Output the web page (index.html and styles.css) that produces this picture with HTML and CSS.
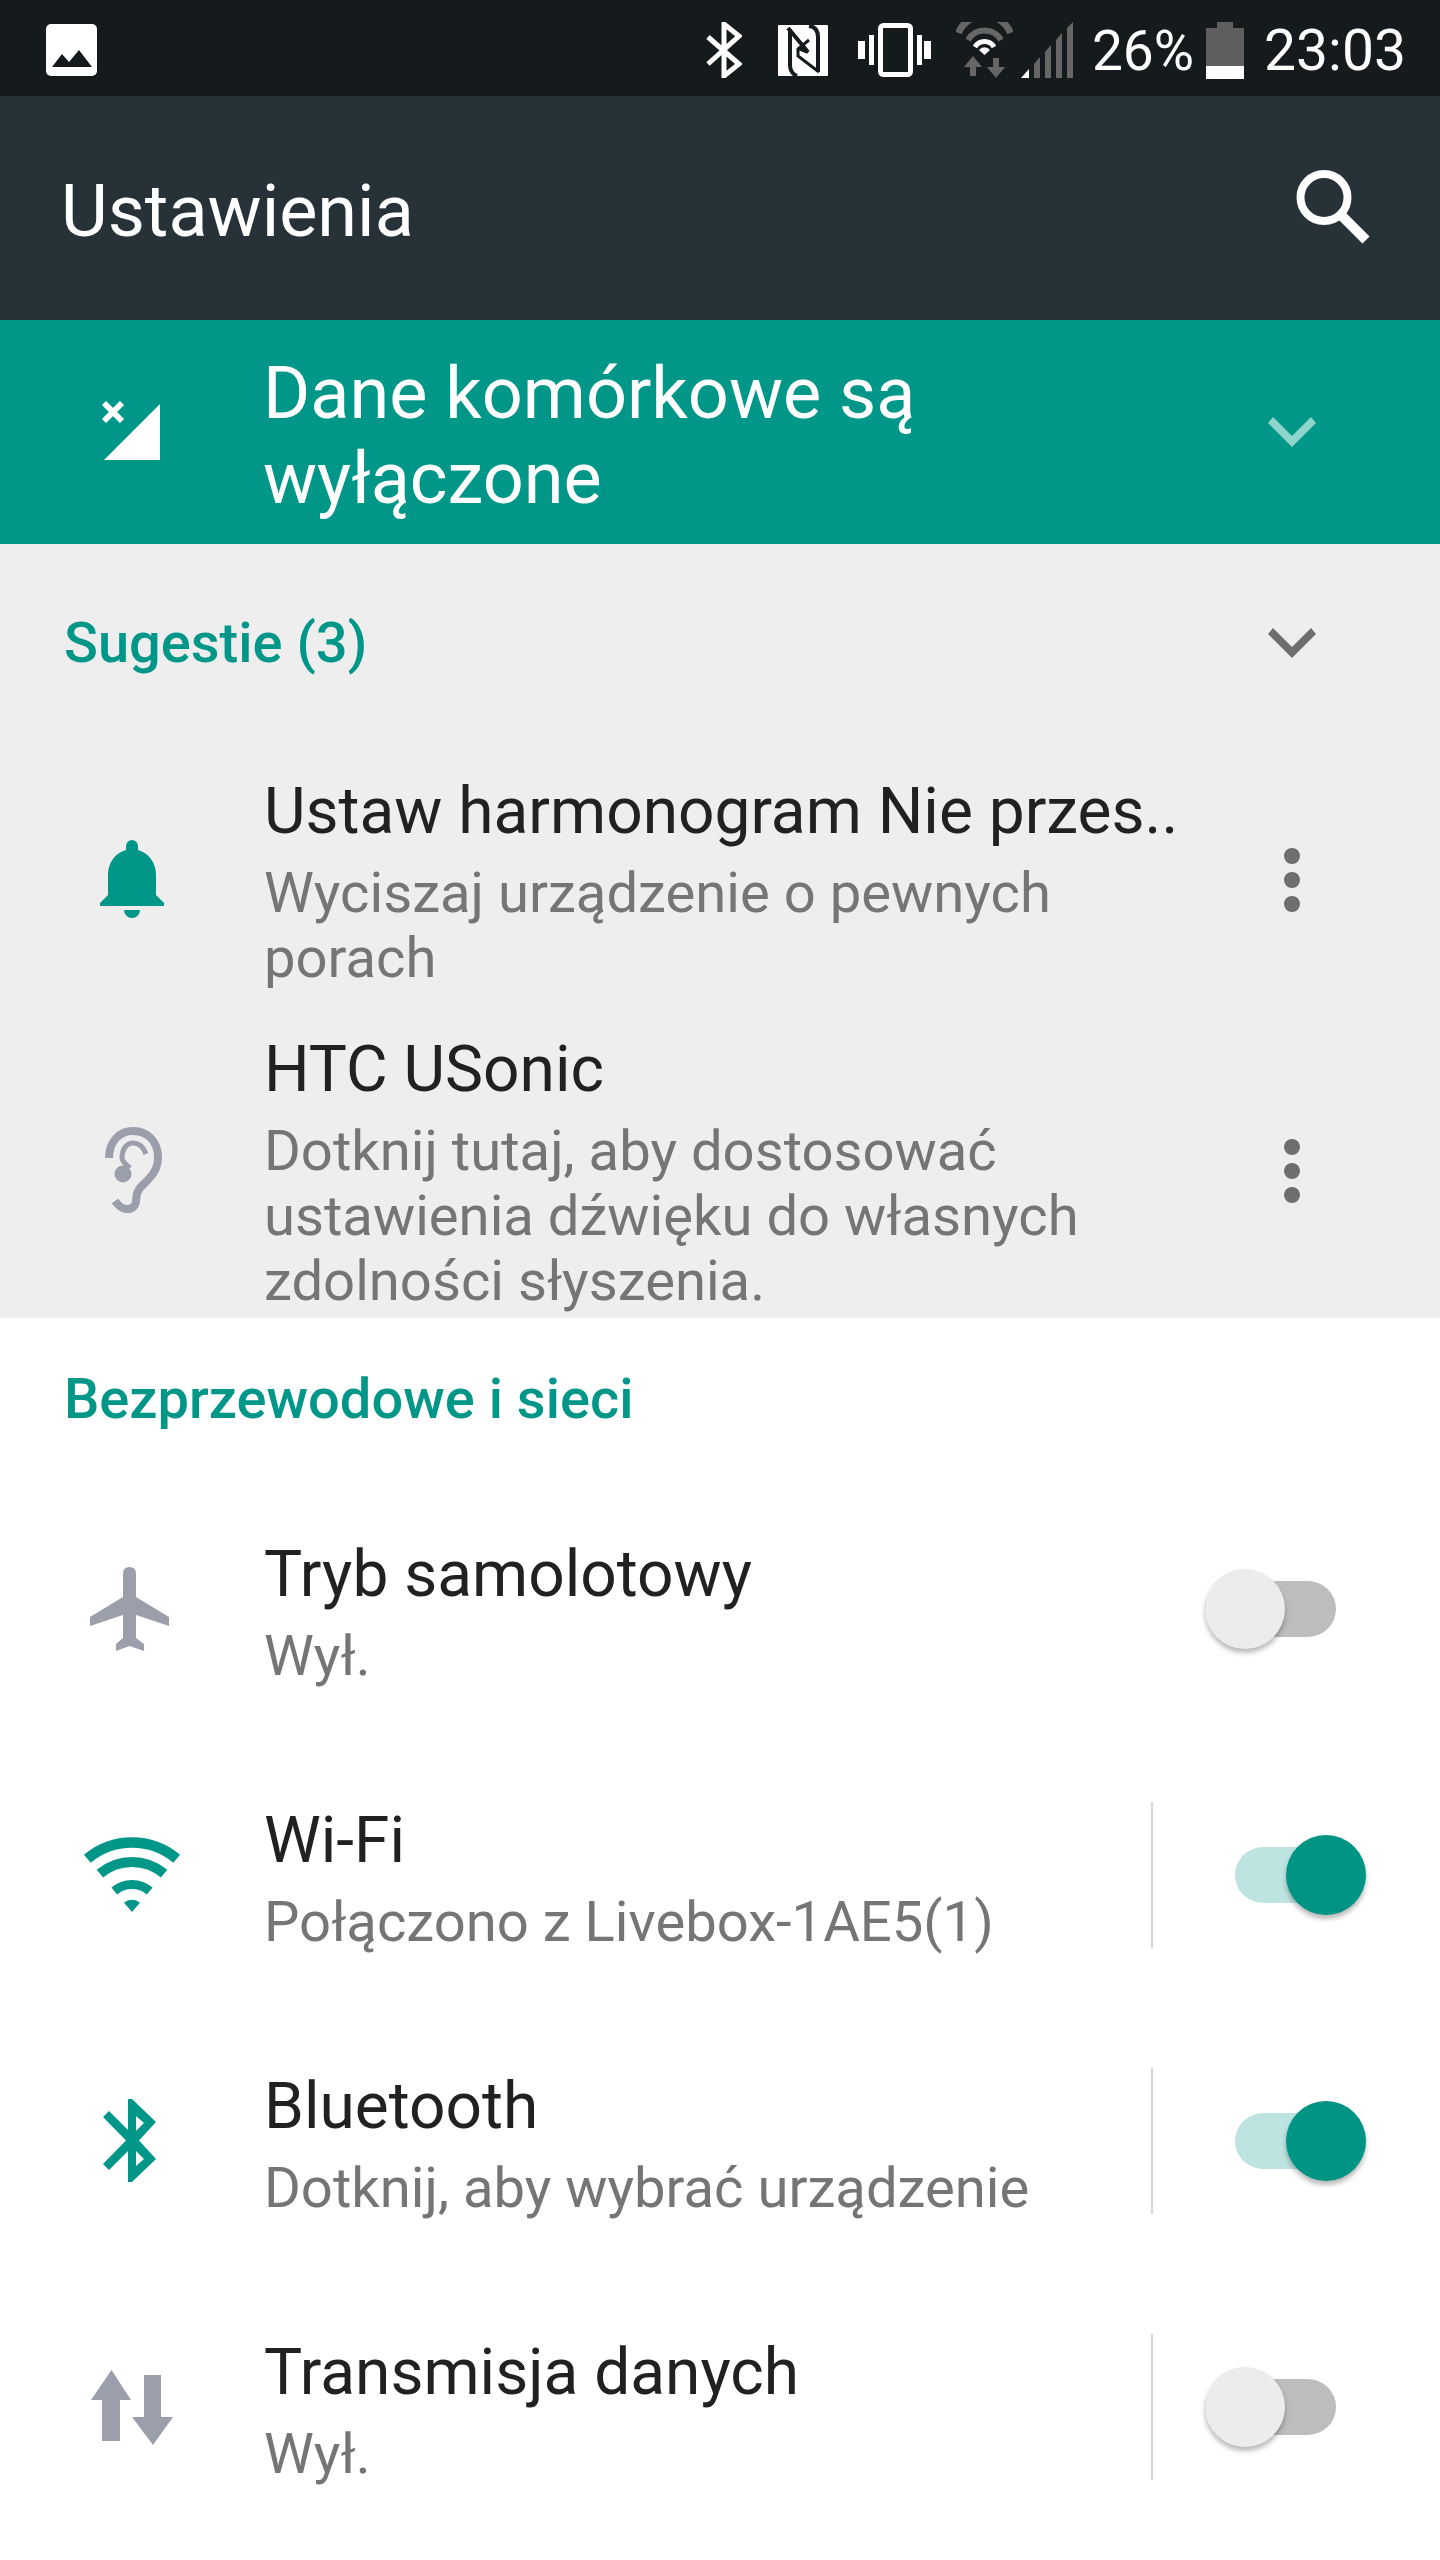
FILE: index.html
```html
<!DOCTYPE html>
<html lang="pl">
<head>
    <meta charset="UTF-8">
    <meta name="viewport" content="width=device-width, initial-scale=1.0">
    <title>Ustawienia</title>
    <link rel="stylesheet" href="styles.css">
</head>
<body>
    <div class="status-bar">
        <svg class="status-image" width="51" height="52" viewBox="0 0 51 52">
            <rect width="51" height="52" rx="5" fill="#fff"/>
            <path d="M6 43 L16 30 L23 38 L33 26 L46 43 Z" fill="#151a1d"/>
        </svg>
        <div class="status-right">
            <svg class="st-bt" width="36" height="56" viewBox="0 0 36 56">
                <path d="M2 15 L33 42 L18 54 V2 L33 14 L2 42" fill="none" stroke="#fff" stroke-width="5"/>
            </svg>
            <svg class="st-nfc" width="50" height="51" viewBox="0 0 50 51">
                <rect width="50" height="51" rx="1" fill="#fff"/>
                <g fill="none" stroke="#151a1d">
                    <path d="M12 4 V40 Q12 48 19 51" stroke-width="4"/>
                    <path d="M10 3 L30 27 L20 23" stroke-width="4"/>
                    <path d="M31 15 L20 24 V31 L41 47" stroke-width="3"/>
                    <path d="M31 1 Q40 2 40 12 V47" stroke-width="4"/>
                </g>
            </svg>
            <svg class="st-vib" width="73" height="54" viewBox="0 0 73 54">
                <rect x="22.5" y="2.5" width="30" height="49" rx="3" fill="none" stroke="#fff" stroke-width="5"/>
                <path d="M0 18 H7 V36 H0 Z M11 12 H16 V42 H11 Z M59 12 H64 V42 H59 Z M66 18 H73 V36 H66 Z" fill="#fff"/>
            </svg>
            <svg class="st-wifi" width="57" height="56" viewBox="0 0 57 56">
                <path d="M2.5 11 A 28 28 0 0 1 54.5 11" fill="none" stroke="#666" stroke-width="7"/>
                <path d="M12 18 A 19 19 0 0 1 45 18" fill="none" stroke="#666" stroke-width="6"/>
                <path d="M19 25 A 11 11 0 0 1 38 25" fill="none" stroke="#fff" stroke-width="5"/>
                <path d="M23 28 A 7 7 0 0 1 34 28 L28.5 33 Z" fill="#fff"/>
                <path d="M8 45 L17 34 L26 45 H20 V54 H14 V45 Z M31 45 H37 V36 H43 V45 H49 L40 56 Z" fill="#666"/>
            </svg>
            <svg class="st-signal" width="52" height="56" viewBox="0 0 52 56">
                <path d="M0 56 L8 47 V56 Z" fill="#fff"/>
                <path d="M13 42 L19 35 V56 H13 Z M24 30 L30 23 V56 H24 Z M35 18 L41 11 V56 H35 Z M46 6 L52 0 V56 H46 Z" fill="#666"/>
            </svg>
            <span class="st-text st-percent">26%</span>
            <svg class="st-battery" width="38" height="57" viewBox="0 0 38 57">
                <path d="M11 0 H27 V6 H38 V44 H0 V6 H11 Z" fill="#5e5e5e"/>
                <rect y="44" width="38" height="13" fill="#fff"/>
            </svg>
            <span class="st-text st-time">23:03</span>
        </div>
    </div>

    <div class="toolbar">
        <h1 class="toolbar-title">Ustawienia</h1>
        <svg class="toolbar-search" width="76" height="76" viewBox="0 0 76 76">
            <circle cx="30" cy="27.5" r="23.5" fill="none" stroke="#fff" stroke-width="8"/>
            <path d="M47 45 L72 70" stroke="#fff" stroke-width="10" fill="none"/>
        </svg>
    </div>

    <div class="banner">
        <svg class="row-icon" width="112" height="112" viewBox="0 0 112 112">
            <path d="M28 84 L84 28 V84 Z" fill="#fff"/>
            <path d="M28 27 L46 45 M46 27 L28 45" stroke="#fff" stroke-width="6" fill="none"/>
        </svg>
        <div class="banner-text">Dane komórkowe są wyłączone</div>
        <svg class="chevron" width="48" height="30" viewBox="0 0 48 30">
            <path d="M0 6 L5 0 L24 19 L43 0 L48 6 L24 30 Z" fill="#8fd5cb"/>
        </svg>
    </div>

    <div class="suggestions">
        <div class="suggestions-head">
            <span class="section-title">Sugestie (3)</span>
            <svg class="chevron" width="48" height="30" viewBox="0 0 48 30">
                <path d="M0 6 L5 0 L24 19 L43 0 L48 6 L24 30 Z" fill="#6e6e6e"/>
            </svg>
        </div>

        <div class="suggestion">
            <svg class="row-icon" width="112" height="112" viewBox="0 0 112 112">
                <path d="M56 15 a6 6 0 0 1 6 6 V25 C73 28 80 38 80 50 V70 L88 78 V81 H24 V78 L32 70 V50 C32 38 39 28 50 25 V21 a6 6 0 0 1 6 -6 Z" fill="#009688"/>
                <path d="M48 85 H64 A8 8 0 0 1 48 85 Z" fill="#009688"/>
            </svg>
            <div class="row-text">
                <div class="row-title">Ustaw harmonogram Nie przes..</div>
                <div class="row-sub">Wyciszaj urządzenie o pewnych porach</div>
            </div>
            <div class="dots"><i></i><i></i><i></i></div>
        </div>

        <div class="suggestion">
            <svg class="row-icon" width="112" height="112" viewBox="0 0 112 112">
                <path d="M33 43 C33 26 44 16 57 16 C72 16 82 27 82 42 C82 58 72 64 64 73 C58 80 62 84 59 90 C55 96 46 96 39 86" fill="none" stroke="#9b9fac" stroke-width="8"/>
                <path d="M70 39 C67 31 62 28 57 28 C50 28 46 35 46 43 C46 47 51 50 54 53" fill="none" stroke="#9b9fac" stroke-width="5"/>
                <circle cx="47" cy="59" r="8.5" fill="#9b9fac"/>
            </svg>
            <div class="row-text">
                <div class="row-title">HTC USonic</div>
                <div class="row-sub">Dotknij tutaj, aby dostosować ustawienia dźwięku do własnych zdolności słyszenia.</div>
            </div>
            <div class="dots"><i></i><i></i><i></i></div>
        </div>
    </div>

    <div class="section-head">
        <span class="section-title">Bezprzewodowe i sieci</span>
    </div>

    <div class="setting">
        <svg class="row-icon" width="112" height="112" viewBox="0 0 112 112">
            <path d="M47 17 Q47 10 53.5 10 Q60 10 60 17 V40 L93 60 V69 L60 58 V81 L68 87 V94 L53.5 89 L40 94 V87 L47 81 V58 L14 69 V60 L47 40 Z" fill="#9b9fac"/>
        </svg>
        <div class="row-text">
            <div class="row-title">Tryb samolotowy</div>
            <div class="row-sub">Wył.</div>
        </div>
        <div class="setting-side no-divider">
            <div class="switch"><span class="track"></span><span class="thumb"></span></div>
        </div>
    </div>

    <div class="setting">
        <svg class="row-icon" width="112" height="112" viewBox="0 0 112 112">
            <g fill="none" stroke="#009688">
                <path d="M11.3 35.8 A 69.5 69.5 0 0 1 100.7 35.8" stroke-width="10.5"/>
                <path d="M23.9 50.7 A 50 50 0 0 1 88.1 50.7" stroke-width="10"/>
                <path d="M38.3 68 A 27.5 27.5 0 0 1 73.7 68" stroke-width="9"/>
            </g>
            <path d="M56 89 L48 79.8 A 12 12 0 0 1 64 79.8 Z" fill="#009688"/>
        </svg>
        <div class="row-text">
            <div class="row-title">Wi-Fi</div>
            <div class="row-sub">Połączono z Livebox-1AE5(1)</div>
        </div>
        <div class="setting-side">
            <div class="switch on"><span class="track"></span><span class="thumb"></span></div>
        </div>
    </div>

    <div class="setting">
        <svg class="row-icon" width="112" height="112" viewBox="0 0 112 112">
            <path fill-rule="evenodd" d="M52 10 H56 L80 33 L63 51.5 L80 70 L56 93 H52 V62 L33 81 L27 75 L50 51.5 L27 28 L33 22 L52 41 Z M60 27 L68 34 L60 42 Z M60 62 L68 70 L60 77 Z" fill="#009688"/>
        </svg>
        <div class="row-text">
            <div class="row-title">Bluetooth</div>
            <div class="row-sub">Dotknij, aby wybrać urządzenie</div>
        </div>
        <div class="setting-side">
            <div class="switch on"><span class="track"></span><span class="thumb"></span></div>
        </div>
    </div>

    <div class="setting">
        <svg class="row-icon" width="112" height="112" viewBox="0 0 112 112">
            <path d="M15 45 L35.5 15 L55 45 H44 V86 H26 V45 Z" fill="#9b9fac"/>
            <path d="M68 20 H85 V62 H97 L77 90 L56 62 H68 Z" fill="#9b9fac"/>
        </svg>
        <div class="row-text">
            <div class="row-title">Transmisja danych</div>
            <div class="row-sub">Wył.</div>
        </div>
        <div class="setting-side">
            <div class="switch"><span class="track"></span><span class="thumb"></span></div>
        </div>
    </div>
</body>
</html>
```

FILE: styles.css
```css
body {
    margin: 0;
    font-family: Roboto, "Noto Sans", sans-serif;
    background: #fff;
    color: #212121;
}

/* status bar */
.status-bar {
    height: 96px;
    box-sizing: border-box;
    padding: 4px 34px 0 46px;
    background: #151a1d;
    display: flex;
    align-items: center;
    justify-content: space-between;
}
.status-right {
    display: flex;
    align-items: center;
}
.st-nfc { margin-left: 36px; }
.st-vib { margin-left: 30px; }
.st-wifi { margin-left: 25px; }
.st-signal { margin-left: 8px; }
.st-percent { margin-left: 19px; }
.st-battery { margin-left: 12px; }
.st-time { margin-left: 20px; }
.st-text {
    color: #fff;
    font-size: 57px;
    line-height: 56px;
    padding-top: 2px;
}
.st-percent {
    font-size: 55px;
}

/* toolbar */
.toolbar {
    height: 224px;
    box-sizing: border-box;
    padding: 0 70px 0 61px;
    background: #263238;
    display: flex;
    align-items: center;
    justify-content: space-between;
}
.toolbar-title {
    margin: 6px 0 0;
    color: #fff;
    font-size: 72px;
    font-weight: 400;
}

/* banner */
.banner {
    height: 224px;
    background: #009688;
    color: #fff;
    display: flex;
    align-items: center;
}
.banner-text {
    width: 720px;
    margin-top: 8px;
    font-size: 72px;
    line-height: 85px;
}
.chevron {
    margin-left: auto;
    margin-right: 124px;
}

.row-icon {
    flex: none;
    margin: 0 75px 0 76px;
}

/* suggestions */
.suggestions {
    background: #eee;
    padding-bottom: 4px;
}
.suggestions-head {
    height: 198px;
    padding-left: 64px;
    display: flex;
    align-items: center;
}
.section-title {
    color: #009688;
    font-size: 56px;
    font-weight: 500;
}
.suggestion {
    display: flex;
    align-items: center;
    margin-top: 33px;
}
.suggestion + .suggestion {
    margin-top: 42px;
}
.suggestion .row-icon {
    margin-bottom: 5px;
}
.row-text {
    flex: 1;
    min-width: 0;
    padding-left: 1px;
}
.row-title {
    font-size: 64px;
    line-height: 74px;
    margin-bottom: 12px;
    white-space: nowrap;
}
.row-sub {
    width: 860px;
    color: #757575;
    font-size: 56.2px;
    line-height: 65px;
}
.dots {
    display: flex;
    flex-direction: column;
    gap: 8px;
    margin: 0 140px 6px 0;
}
.dots i {
    width: 16px;
    height: 16px;
    border-radius: 50%;
    background: #6e6e6e;
}

/* wireless section */
.section-head {
    height: 162px;
    padding-left: 64px;
    display: flex;
    align-items: center;
}
.setting {
    height: 266px;
    display: flex;
    align-items: center;
}
.setting-side {
    flex: none;
    width: 235px;
    height: 146px;
    margin-top: -8px;
    padding-left: 52px;
    border-left: 2px solid #d4d4d4;
    display: flex;
    align-items: center;
}
.setting-side.no-divider {
    border-left-color: transparent;
}

/* switch */
.switch {
    position: relative;
    width: 161px;
    height: 80px;
}
.track {
    position: absolute;
    left: 0;
    top: 12px;
    width: 131px;
    height: 56px;
    border-radius: 28px;
    background: #bdbdbd;
}
.thumb {
    position: absolute;
    left: 0;
    top: 0;
    width: 80px;
    height: 80px;
    border-radius: 50%;
    background: #ebedec;
    box-shadow: 0 4px 5px rgba(0, 0, 0, 0.28);
}
.switch.on .track {
    left: 30px;
    background: #bde4e0;
}
.switch.on .thumb {
    left: 81px;
    background: #009485;
}
```
